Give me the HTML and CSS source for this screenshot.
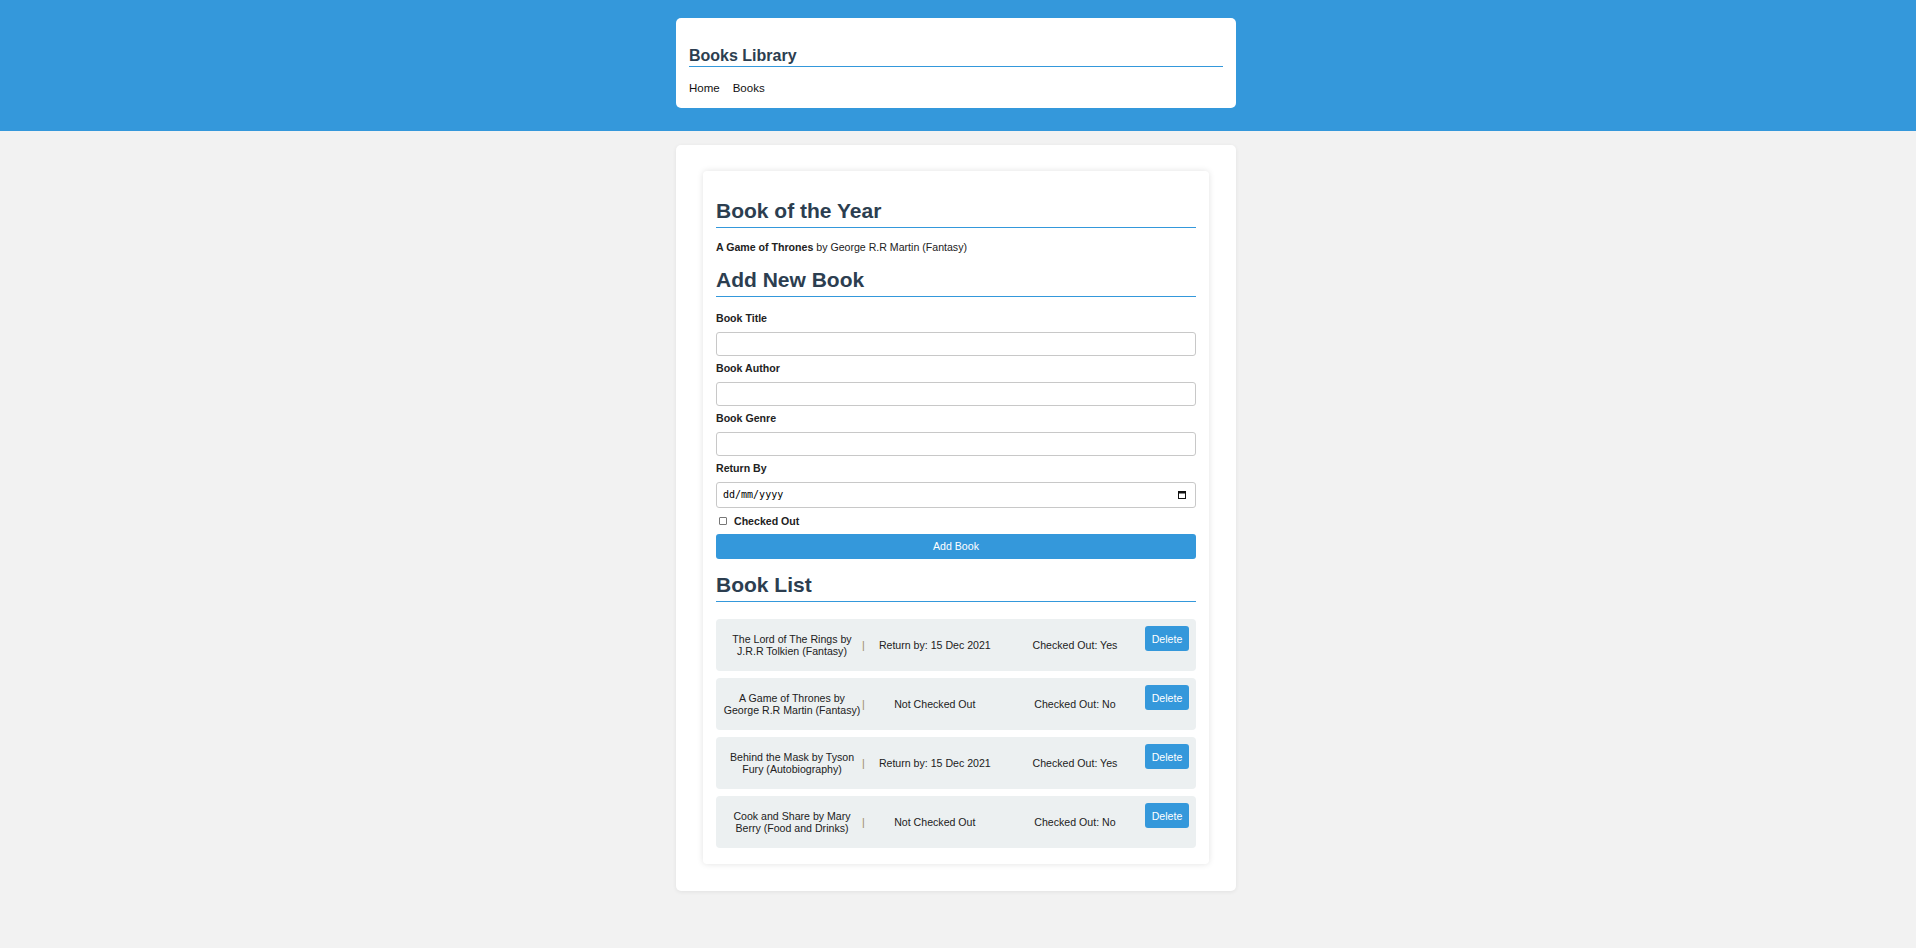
FILE: index.html
```html
<!DOCTYPE html>
<html lang="en">
<head>
<meta charset="utf-8">
<title>Books Library</title>
<link rel="stylesheet" href="styles.css">
</head>
<body>
<header class="topbar">
  <div class="header-card">
    <h1 class="site-title">Books Library</h1>
    <nav class="nav">
      <a href="#" class="nav-link">Home</a>
      <a href="#" class="nav-link">Books</a>
    </nav>
  </div>
</header>
<main class="page">
  <div class="outer-card">
    <div class="inner-card">
      <h2 class="section-title">Book of the Year</h2>
      <p class="boty"><strong>A Game of Thrones</strong> by George R.R Martin (Fantasy)</p>

      <h2 class="section-title">Add New Book</h2>
      <form class="book-form">
        <div class="field">
          <label class="field-label" for="title">Book Title</label>
          <input class="text-input" id="title" type="text">
        </div>
        <div class="field">
          <label class="field-label" for="author">Book Author</label>
          <input class="text-input" id="author" type="text">
        </div>
        <div class="field">
          <label class="field-label" for="genre">Book Genre</label>
          <input class="text-input" id="genre" type="text">
        </div>
        <div class="field">
          <label class="field-label" for="ret">Return By</label>
          <div class="date-wrap">
            <input class="text-input date-input" id="ret" type="text" placeholder="dd/mm/yyyy">
            <svg class="cal-icon" width="8" height="8" viewBox="0 0 8 8" aria-hidden="true"><rect x="0.5" y="0.5" width="7" height="7" fill="none" stroke="#111" stroke-width="1"/><rect x="0.5" y="0.5" width="7" height="2" fill="#111"/></svg>
          </div>
        </div>
        <label class="check-row"><input class="check" type="checkbox"><span>Checked Out</span></label>
        <button type="button" class="add-btn">Add Book</button>
      </form>

      <h2 class="section-title list-title">Book List</h2>
      <ul class="book-list">
        <li class="book-row">
          <div class="cell-title">The Lord of The Rings by J.R.R Tolkien (Fantasy)</div>
          <span class="sep">|</span>
          <div class="cell">Return by: 15 Dec 2021</div>
          <div class="cell">Checked Out: Yes</div>
          <button type="button" class="del-btn">Delete</button>
        </li>
        <li class="book-row">
          <div class="cell-title">A Game of Thrones by George R.R Martin (Fantasy)</div>
          <span class="sep">|</span>
          <div class="cell">Not Checked Out</div>
          <div class="cell">Checked Out: No</div>
          <button type="button" class="del-btn">Delete</button>
        </li>
        <li class="book-row">
          <div class="cell-title">Behind the Mask by Tyson Fury (Autobiography)</div>
          <span class="sep">|</span>
          <div class="cell">Return by: 15 Dec 2021</div>
          <div class="cell">Checked Out: Yes</div>
          <button type="button" class="del-btn">Delete</button>
        </li>
        <li class="book-row">
          <div class="cell-title">Cook and Share by Mary Berry (Food and Drinks)</div>
          <span class="sep">|</span>
          <div class="cell">Not Checked Out</div>
          <div class="cell">Checked Out: No</div>
          <button type="button" class="del-btn">Delete</button>
        </li>
      </ul>
    </div>
  </div>
</main>
</body>
</html>
```
FILE: styles.css
```css
* { box-sizing: border-box; }

html, body {
  margin: 0;
  padding: 0;
}

body {
  background: #f2f2f2;
  font-family: "Liberation Sans", Arial, sans-serif;
  font-size: 10.6px;
  color: #222;
  min-height: 948px;
}

.topbar {
  background: #3498db;
  padding: 18px 4px 23px 0;
}

.header-card {
  width: 560px;
  margin: 0 auto;
  background: #fff;
  border-radius: 5px;
  padding: 28px 13px 13px;
}

.site-title {
  margin: 0;
  font-size: 16px;
  line-height: 19px;
  font-weight: bold;
  color: #2c3e50;
  padding-bottom: 1px;
  border-bottom: 1px solid #3498db;
}

.nav {
  margin-top: 14px;
  display: flex;
  gap: 13px;
  font-size: 11.5px;
  line-height: 14px;
}

.nav-link {
  color: #111;
  text-decoration: none;
}

.page {
  padding: 14px 4px 0 0;
}

.outer-card {
  width: 560px;
  margin: 0 auto;
  background: #fff;
  border-radius: 5px;
  padding: 26px 27px 27px;
  box-shadow: 0 1px 4px rgba(0, 0, 0, 0.07);
}

.inner-card {
  background: #fff;
  border-radius: 4px;
  padding: 13px 13px 16px;
  box-shadow: 0 0 6px rgba(0, 0, 0, 0.12);
}

.section-title {
  margin: 14.5px 0 0;
  font-size: 21px;
  line-height: 24px;
  font-weight: bold;
  color: #2c3e50;
  padding-bottom: 4px;
  border-bottom: 1px solid #3498db;
}

.boty {
  margin: 13px 0 0;
  line-height: 13px;
  color: #222;
}

.book-form {
  margin-top: 14.5px;
  display: flex;
  flex-direction: column;
}

.field {
  display: flex;
  flex-direction: column;
  margin-bottom: 6px;
}

.field-label {
  font-weight: bold;
  line-height: 13px;
  color: #222;
  margin-bottom: 7px;
}

.text-input {
  width: 100%;
  height: 24px;
  border: 1px solid #c8c8c8;
  border-radius: 3px;
  background: #fff;
  padding: 0 6px;
  font-family: "Liberation Sans", Arial, sans-serif;
  font-size: 10.6px;
  outline: none;
}

.date-wrap {
  position: relative;
}

.date-input {
  height: 26px;
  font-family: "DejaVu Sans Mono", "Liberation Mono", monospace;
  font-size: 10px;
  color: #000;
}

.date-input::placeholder {
  color: #000;
  opacity: 1;
}

.cal-icon {
  position: absolute;
  right: 10px;
  top: 9px;
}

.check-row {
  display: flex;
  align-items: center;
  font-weight: bold;
  line-height: 13px;
  margin-top: 1px;
  color: #222;
}

.check {
  appearance: none;
  -webkit-appearance: none;
  width: 8px;
  height: 8px;
  margin: 0 7px 0 3px;
  border: 1px solid #777;
  border-radius: 1px;
  background: #fff;
}

.add-btn {
  margin-top: 6px;
  height: 25px;
  width: 100%;
  border: none;
  border-radius: 3px;
  background: #3498db;
  color: #fff;
  font-family: "Liberation Sans", Arial, sans-serif;
  font-size: 10.6px;
  cursor: pointer;
}

.list-title {
  margin-top: 14px;
}

.book-list {
  list-style: none;
  margin: 17.5px 0 0;
  padding: 0;
  display: flex;
  flex-direction: column;
  gap: 7px;
}

.book-row {
  display: flex;
  align-items: flex-start;
  background: #ecf0f1;
  border-radius: 4px;
  padding: 7px 7px 7px 6px;
  color: #222;
}

.cell-title {
  width: 140px;
  flex: none;
  text-align: center;
  line-height: 12px;
  margin: 7px 0;
  align-self: center;
}

.sep {
  flex: none;
  align-self: center;
  color: #9c8a66;
  line-height: 12px;
}

.cell {
  flex: 1;
  text-align: center;
  align-self: center;
  line-height: 12px;
}

.del-btn {
  flex: none;
  width: 44px;
  height: 25px;
  border: none;
  border-radius: 3px;
  background: #3498db;
  color: #fff;
  font-family: "Liberation Sans", Arial, sans-serif;
  font-size: 10.6px;
  padding: 0;
  cursor: pointer;
}
```
